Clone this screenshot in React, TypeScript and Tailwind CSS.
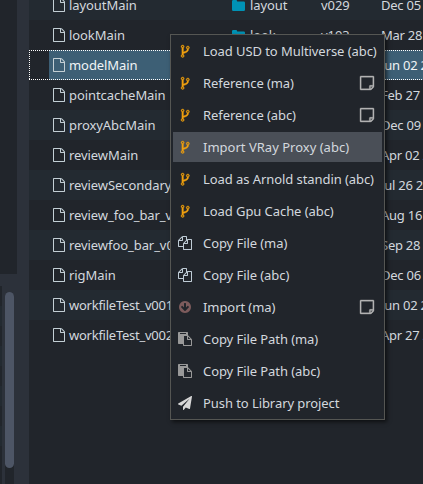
import React from "react";

type Glyph = { box: string; d: string };

const FILE: Glyph = {
  box: "0 0 1536 1792",
  d: "M1468 380q28 28 48 76t20 88v1152q0 40-28 68t-68 28h-1344q-40 0-68-28t-28-68v-1600q0-40 28-68t68-28h896q40 0 88 20t76 48zm-444-244v376h376q-10-29-22-41l-313-313q-12-12-41-22zm384 1528v-1024h-416q-40 0-68-28t-28-68v-416h-768v1536h1280z",
};
const FORK: Glyph = {
  box: "0 0 1024 1536",
  d: "M288 1344q0-40-28-68t-68-28-68 28-28 68 28 68 68 28 68-28 28-68zm0-1152q0-40-28-68t-68-28-68 28-28 68 28 68 68 28 68-28 28-68zm640 128q0-40-28-68t-68-28-68 28-28 68 28 68 68 28 68-28 28-68zm96 0q0 52-26 96.5t-70 69.5q-2 287-226 414-67 38-203 81-128 40-169.5 71t-41.5 100v26q44 25 70 69.5t26 96.5q0 80-56 136t-136 56-136-56-56-136q0-52 26-96.5t70-69.5v-820q-44-25-70-69.5t-26-96.5q0-80 56-136t136-56 136 56 56 136q0 52-26 96.5t-70 69.5v497q54-26 154-57 55-17 87.5-29.5t70.5-31 59-39.5 40.5-51 28-69.5 8.5-91.5q-44-25-70-69.5t-26-96.5q0-80 56-136t136-56 136 56 56 136z",
};
const COPY: Glyph = {
  box: "0 0 1792 1792",
  d: "M1696 384q40 0 68 28t28 68v1216q0 40-28 68t-68 28h-960q-40 0-68-28t-28-68v-288h-544q-40 0-68-28t-28-68v-672q0-40 20-88t48-76l408-408q28-28 76-48t88-20h416q40 0 68 28t28 68v328q68-40 128-40h416zm-544 213l-299 299h299v-299zm-640-384l-299 299h299v-299zm196 647l316-316v-416h-384v416q0 40-28 68t-68 28h-416v640h512v-256q0-40 20-88t48-76zm956 804v-1152h-384v416q0 40-28 68t-68 28h-416v640h896z",
};
const PASTE: Glyph = {
  box: "0 0 1792 1792",
  d: "M768 1664h896v-640h-416q-40 0-68-28t-28-68v-416h-384v1152zm256-1440v-64q0-13-9.5-22.5t-22.5-9.5h-704q-13 0-22.5 9.5t-9.5 22.5v64q0 13 9.5 22.5t22.5 9.5h704q13 0 22.5-9.5t9.5-22.5zm256 672h299l-299-299v299zm512 128v672q0 40-28 68t-68 28h-960q-40 0-68-28t-28-68v-160h-544q-40 0-68-28t-28-68v-1344q0-40 28-68t68-28h1088q40 0 68 28t28 68v328q21 13 36 28l408 408q28 28 48 76t20 88z",
};
const NOTE: Glyph = {
  box: "0 104 1536 1536",
  d: "M1400 1256h-248v248q29-10 41-22l185-185q12-12 22-41zm-280-128h288v-896h-1280v1280h896v-288q0-40 28-68t68-28zm416-928v1024q0 40-20 88t-48 76l-184 184q-28 28-76 48t-88 20h-1024q-40 0-68-28t-28-68v-1344q0-40 28-68t68-28h1344q40 0 68 28t28 68z",
};
const DOWN: Glyph = {
  box: "0 128 1536 1536",
  d: "M1284 897q0-27-18-45l-91-91q-18-18-45-18t-45 18l-189 189v-502q0-26-19-45t-45-19h-128q-26 0-45 19t-19 45v502l-189-189q-19-19-45-19t-45 19l-91 91q-18 18-18 45t18 45l362 362 91 91q18 18 45 18t45-18l91-91 362-362q18-18 18-45zm252-1q0 209-103 385.5t-279.5 279.5-385.5 103-385.5-103-279.5-279.5-103-385.5 103-385.5 279.5-279.5 385.5-103 385.5 103 279.5 279.5 103 385.5z",
};
const SEND: Glyph = {
  box: "0 0 1792 1792",
  d: "M1764 11q33 24 27 64l-256 1536q-5 29-32 45-14 8-31 8-11 0-24-5l-453-185-242 295q-18 23-49 23-13 0-22-4-19-7-30.5-23.5t-11.5-36.5v-349l864-1059-1069 925-395-162q-37-14-40-55-2-40 32-59l1664-960q15-9 32-9 20 0 36 11z",
};
const FOLDER: Glyph = {
  box: "0 0 13 11",
  d: "M0 1.2Q0 0 1.2 0H4Q5.1 0 5.1 1V1.5H11.8Q13 1.5 13 2.7V9.8Q13 11 11.8 11H1.2Q0 11 0 9.8Z",
};

function Icon({ glyph, className }: { glyph: Glyph; className: string }) {
  return (
    <svg viewBox={glyph.box} className={`shrink-0 overflow-visible fill-current ${className}`}>
      <path d={glyph.d} />
    </svg>
  );
}

type Row = { name: string; date: string; type?: string; version?: string; selected?: boolean; wide?: boolean };

const rows: Row[] = [
  { name: "layoutMain", type: "layout", version: "v029", date: "Dec 05 2" },
  { name: "lookMain", type: "look", version: "v193", date: "Mar 28 2" },
  { name: "modelMain", date: "Jun 02 2", selected: true },
  { name: "pointcacheMain", date: "Feb 27 2" },
  { name: "proxyAbcMain", date: "Dec 09 2" },
  { name: "reviewMain", date: "Apr 02 2" },
  { name: "reviewSecondary", date: "Jul 26 2" },
  { name: "review_foo_bar_v", date: "Aug 16 2" },
  { name: "reviewfoo_bar_v0", date: "Sep 28 2" },
  { name: "rigMain", date: "Dec 06 2" },
  { name: "workfileTest_v001", date: "Jun 02 2", wide: true },
  { name: "workfileTest_v002", date: "Apr 27 2", wide: true },
];

type Item = { label: string; glyph: Glyph; icon: string; note?: boolean; active?: boolean };

const fork = "h-[12.5px] w-[8.5px] stroke-current [stroke-width:45] text-[#f0a00f]";
const items: Item[] = [
  { label: "Load USD to Multiverse (abc)", glyph: FORK, icon: fork },
  { label: "Reference (ma)", glyph: FORK, icon: fork, note: true },
  { label: "Reference (abc)", glyph: FORK, icon: fork, note: true },
  { label: "Import VRay Proxy (abc)", glyph: FORK, icon: fork, active: true },
  { label: "Load as Arnold standin (abc)", glyph: FORK, icon: fork },
  { label: "Load Gpu Cache (abc)", glyph: FORK, icon: fork },
  { label: "Copy File (ma)", glyph: COPY, icon: "size-3.5 text-[#bfccd6]" },
  { label: "Copy File (abc)", glyph: COPY, icon: "size-3.5 text-[#bfccd6]" },
  { label: "Import (ma)", glyph: DOWN, icon: "size-3 text-[#7d5b5c]", note: true },
  { label: "Copy File Path (ma)", glyph: PASTE, icon: "size-3.5 text-[#999999]" },
  { label: "Copy File Path (abc)", glyph: PASTE, icon: "size-3.5 text-[#999999]" },
  { label: "Push to Library project", glyph: SEND, icon: "size-3.5 text-[#d8d8d8]" },
];

function VersionRow({ row, index }: { row: Row; index: number }) {
  const bg = row.selected ? "" : index % 2 === 0 ? "bg-[#232a31]" : "";
  return (
    <div className={`relative flex h-[30px] shrink-0 ${bg}`}>
      <div className={`ml-5 flex flex-1 items-center pl-1 ${row.selected ? "bg-[#3d5f75] text-[#f0f4f5]" : ""}`}>
        <Icon glyph={FILE} className="h-3.5 w-3 text-[#c3cfd5]" />
        <span className={`ml-1 w-[167px] shrink-0 ${row.wide ? "tracking-[-0.25px]" : ""}`}>{row.name}</span>
        <span className="-ml-1 flex w-[89px] shrink-0 items-center">
          {row.type && (
            <>
              <Icon glyph={FOLDER} className="h-[11px] w-[13px] text-[#0092b5]" />
              <span className="ml-[5px]">{row.type}</span>
            </>
          )}
        </span>
        <span className="w-[60px] shrink-0">{row.version}</span>
        <span className="tracking-[-0.25px]">{row.date}</span>
      </div>
      {row.selected && (
        <>
          <div className="absolute inset-x-0 top-0 h-px bg-[repeating-linear-gradient(90deg,#fff_0_1px,transparent_1px_2px)]" />
          <div className="absolute inset-x-0 bottom-0 h-px bg-[repeating-linear-gradient(90deg,#fff_0_1px,transparent_1px_2px)]" />
          <div className="absolute inset-y-0 left-0 w-px bg-[repeating-linear-gradient(180deg,#fff_0_1px,transparent_1px_2px)]" />
        </>
      )}
    </div>
  );
}

export default function App() {
  return (
    <div className="relative flex h-[484px] w-[423px] overflow-hidden bg-[#21252b] font-['Noto_Sans','Open_Sans',sans-serif] text-[13px] leading-[18px] tracking-[-0.07px] whitespace-nowrap text-[#d3d8de]">
      <aside className="flex w-[29px] shrink-0 flex-col bg-[#2c313a]">
        <div className="h-[274px] w-[17px] shrink-0 bg-[#21252b]" />
        <div className="flex flex-1 pt-3">
          <div className="flex w-[2px] flex-col bg-[#21252b]">
            <div className="mt-5 h-5 bg-[#232a31]" />
            <div className="mt-5 h-5 bg-[#232a31]" />
            <div className="mt-5 h-5 bg-[#232a31]" />
            <div className="mt-5 h-5 bg-[#232a31]" />
          </div>
          <div className="mt-[6px] ml-[3px] w-[9px] rounded-t-full bg-[#21252b]">
            <div className="h-[176px] rounded-full bg-[#4d5565]" />
          </div>
        </div>
      </aside>

      <main className="-mt-2.5 flex min-w-0 flex-1 flex-col overflow-hidden">
        {rows.map((row, i) => (
          <VersionRow key={row.name} row={row} index={i} />
        ))}
      </main>

      <div className="absolute top-[34px] left-[170px] flex h-[386px] w-[215px] flex-col gap-0.5 border border-[#555653] bg-[#21252b] px-0.5 pt-px shadow-[2px_2px_4px_rgba(0,0,0,0.6)]">
        {items.map((item) => (
          <div
            key={item.label}
            className={`flex h-[30px] shrink-0 items-center ${item.active ? "bg-[#4a4f57]" : ""}`}
          >
            <span className="ml-[5px] flex w-3.5 shrink-0 justify-center">
              <Icon glyph={item.glyph} className={item.icon} />
            </span>
            <span className={`ml-[11px] flex-1 ${item.active ? "tracking-[0.01px]" : ""}`}>{item.label}</span>
            {item.note && (
              <Icon glyph={NOTE} className="mr-2 size-3.5 stroke-current text-[#b4b4b4] [stroke-width:40]" />
            )}
          </div>
        ))}
      </div>
    </div>
  );
}
